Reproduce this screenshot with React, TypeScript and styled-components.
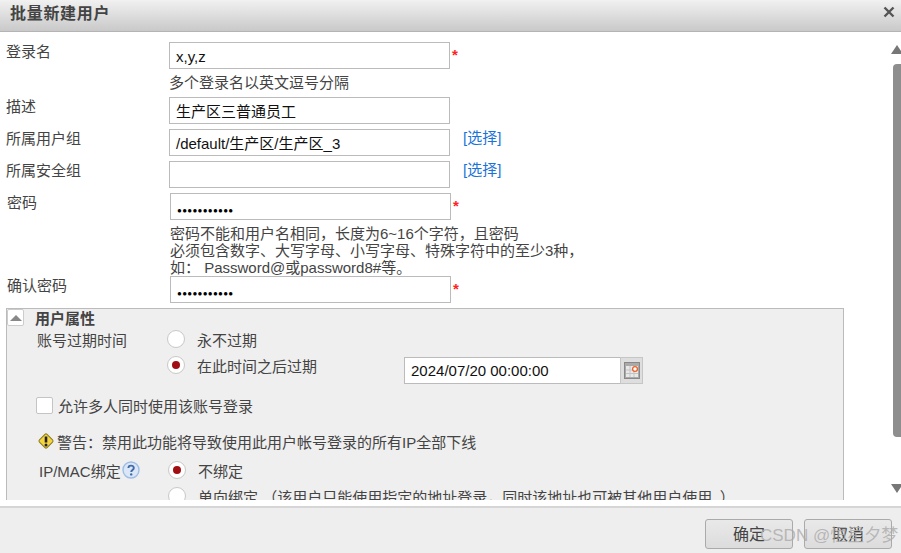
import React, { FC } from "react";
import styled, { createGlobalStyle } from "styled-components";

const GlobalStyle = createGlobalStyle`
  html, body {
    margin: 0;
    padding: 0;
    background: #fff;
  }
  body {
    font-family: "Liberation Sans", "Noto Sans CJK SC", sans-serif;
    font-size: 15px;
    color: #444;
  }
`;

const Dialog = styled.div`
  width: 901px;
  height: 553px;
  display: flex;
  flex-direction: column;
  overflow: hidden;
  position: relative;
`;

const TitleBar = styled.div`
  height: 32px;
  flex: none;
  box-sizing: border-box;
  display: flex;
  align-items: center;
  justify-content: space-between;
  padding: 0 6px 7px 10px;
  background: linear-gradient(#f1f1f1, #c9c9c9);
  border-bottom: 1px solid #b4b4b4;
`;

const Title = styled.b`
  font-size: 16px;
  color: #444;
  letter-spacing: 0.7px;
`;

const Body = styled.div`
  height: 470px;
  flex: none;
  display: flex;
  overflow: hidden;
`;

const Content = styled.div`
  flex: 1;
  padding: 10px 0 0 6px;
`;

const Row = styled.div<{ $nudge?: number; $gap?: number }>`
  display: flex;
  height: 27px;
  margin-bottom: ${(p) => p.$gap ?? 5}px;
  padding-left: ${(p) => p.$nudge ?? 0}px;
`;

const Label = styled.div`
  width: 163px;
  flex: none;
  line-height: 20px;
  color: #444;
`;

const Field = styled.div`
  width: 281px;
  height: 27px;
  flex: none;
  box-sizing: border-box;
  border: 1px solid #bbb;
  background: #fff;
  padding: 1px 6px 0;
  line-height: 26px;
  color: #111;
`;

const Dots = styled.span`
  font-size: 8px;
  letter-spacing: 0.3px;
  color: #000;
`;

const Star = styled.span`
  color: #f22;
  font-weight: bold;
  margin-left: 2px;
  line-height: 26px;
`;

const Pick = styled.a`
  margin-left: 13px;
  line-height: 18px;
  color: #1a73d9;
`;

const Hint = styled.div<{ $left: number; $top?: number; $bottom?: number }>`
  margin: ${(p) => p.$top ?? 0}px 0 ${(p) => p.$bottom ?? 0}px ${(p) => p.$left}px;
  line-height: 17px;
  color: #444;
`;

const Panel = styled.div`
  width: 838px;
  height: 192px;
  box-sizing: border-box;
  margin-top: 5px;
  overflow: hidden;
  background: #efefef;
  border: 1px solid #bbb;
  border-bottom: none;
`;

const PanelHead = styled.div`
  height: 17px;
  display: flex;
  align-items: center;
  gap: 11px;
`;

const Toggle = styled.div`
  width: 17px;
  height: 17px;
  flex: none;
  box-sizing: border-box;
  display: flex;
  align-items: center;
  justify-content: center;
  background: #fff;
  border: 1px solid #ccc;
  border-radius: 2px;
`;

const Arrow = styled.div`
  width: 0;
  height: 0;
  border-left: 6px solid transparent;
  border-right: 6px solid transparent;
  border-bottom: 6px solid #888;
`;

const PanelTitle = styled.b`
  font-size: 15px;
  color: #444;
`;

const OptionRow = styled.div<{ $indent: number; $height: number; $top?: number }>`
  display: flex;
  align-items: center;
  height: ${(p) => p.$height}px;
  margin-top: ${(p) => p.$top ?? 0}px;
  padding-left: ${(p) => p.$indent}px;
  color: #444;
  white-space: nowrap;
`;

const OptionLabel = styled.div<{ $width: number }>`
  width: ${(p) => p.$width}px;
  flex: none;
  display: flex;
  align-items: center;
  gap: 1px;
`;

const Radio = styled.span<{ $on?: boolean }>`
  width: 18px;
  height: 18px;
  flex: none;
  box-sizing: border-box;
  margin-right: 12px;
  display: flex;
  align-items: center;
  justify-content: center;
  border-radius: 50%;
  background: #fff;
  border: 1px solid #c8c8c8;
  &::after {
    content: "";
    width: 8px;
    height: 8px;
    border-radius: 50%;
    background: ${(p) => (p.$on ? "#a00d12" : "transparent")};
  }
`;

const DateGroup = styled.div`
  display: flex;
  align-items: flex-start;
  height: 27px;
  margin: 10px 0 0 87px;
`;

const DateField = styled.div`
  width: 216px;
  height: 27px;
  box-sizing: border-box;
  background: #fff;
  border: 1px solid #bbb;
  border-right: none;
  padding-left: 6px;
  line-height: 26px;
  color: #111;
`;

const CalendarBtn = styled.div`
  width: 23px;
  height: 27px;
  box-sizing: border-box;
  display: flex;
  align-items: center;
  justify-content: center;
  background: #dedede;
  border: 1px solid #c6c6c6;
`;

const CheckBox = styled.span`
  width: 17px;
  height: 17px;
  flex: none;
  box-sizing: border-box;
  margin-right: 5px;
  background: #fff;
  border: 1px solid #c4c4c4;
  border-radius: 2px;
`;

const WarnSvg = styled.svg`
  flex: none;
  margin-right: 2px;
`;

const Scrollbar = styled.div`
  width: 8px;
  flex: none;
  display: flex;
  flex-direction: column;
  align-items: center;
  padding: 13px 0 9px;
`;

const ScrollArrow = styled.div<{ $down?: boolean }>`
  width: 0;
  height: 0;
  flex: none;
  border-left: 6px solid transparent;
  border-right: 6px solid transparent;
  ${(p) => (p.$down ? "border-top: 9px solid #777;" : "border-bottom: 9px solid #777;")}
`;

const ScrollThumb = styled.div`
  width: 8px;
  height: 373px;
  flex: none;
  margin: 10px 0 auto;
  background: #8e8e8e;
  border-radius: 4px 0 0 4px;
`;

const Footer = styled.div`
  flex: 1;
  margin-top: 4px;
  display: flex;
  justify-content: flex-end;
  gap: 11px;
  padding: 11px 9px 0 0;
  background: #eeeeee;
  border-top: 2px solid #d6d6d6;
`;

const Button = styled.div`
  width: 88px;
  height: 30px;
  box-sizing: border-box;
  text-align: center;
  line-height: 29px;
  font-size: 16px;
  color: #444;
  background: linear-gradient(#e9e9e9, #dcdcdc);
  border: 1px solid #aaa;
  border-radius: 3px;
`;

const Watermark = styled.div`
  position: absolute;
  left: 760px;
  top: 527px;
  font-size: 17px;
  line-height: 18px;
  color: rgba(170, 170, 170, 0.8);
  white-space: nowrap;
`;

const CloseIcon: FC = () => (
  <svg width="12" height="12" viewBox="0 0 12 12">
    <path d="M1.5 1.5l9 9M10.5 1.5l-9 9" stroke="#555" strokeWidth="2.4" />
  </svg>
);

const CalendarIcon: FC = () => (
  <svg width="16" height="17" viewBox="0 0 16 17">
    <rect x="0.5" y="0.5" width="15" height="16" fill="#aaa" stroke="#888" />
    <rect x="2" y="4" width="12" height="11" fill="#e8e8e8" />
    <path d="M2 8h12M2 11.5h12M6 4v11M10 4v11" stroke="#c4c4c4" />
    <circle cx="11" cy="7" r="2.4" fill="#fff" stroke="#e8622a" strokeWidth="1.3" />
  </svg>
);

const WarnIcon: FC = () => (
  <WarnSvg width="18" height="18" viewBox="0 0 18 18">
    <rect x="3.6" y="3.6" width="10.8" height="10.8" rx="1.5" transform="rotate(45 9 9)" fill="#f4d53f" stroke="#8d7a1e" />
    <path d="M9 4.5v6" stroke="#222" strokeWidth="2.6" />
    <circle cx="9" cy="13" r="1.5" fill="#222" />
  </WarnSvg>
);

const HelpIcon: FC = () => (
  <svg width="18" height="18" viewBox="0 0 18 18">
    <circle cx="9" cy="9" r="8" fill="#dbe7f6" stroke="#9dbde6" strokeWidth="1.4" />
    <path d="M6.4 7c0-3.2 5.4-3.2 5.4 0 0 2-2.6 2-2.6 4" fill="none" stroke="#3f6aa6" strokeWidth="1.9" />
    <circle cx="9.2" cy="13.4" r="1.2" fill="#3f6aa6" />
  </svg>
);

const App: FC = () => {
  return (
    <Dialog>
      <GlobalStyle />
      <TitleBar>
        <Title>批量新建用户</Title>
        <CloseIcon />
      </TitleBar>
      <Body>
        <Content>
          <Row $gap={2}>
            <Label>登录名</Label>
            <Field>x,y,z</Field>
            <Star>*</Star>
          </Row>
          <Hint $left={163} $top={5} $bottom={6}>多个登录名以英文逗号分隔</Hint>
          <Row>
            <Label>描述</Label>
            <Field>生产区三普通员工</Field>
          </Row>
          <Row>
            <Label>所属用户组</Label>
            <Field>/default/生产区/生产区_3</Field>
            <Pick>[选择]</Pick>
          </Row>
          <Row>
            <Label>所属安全组</Label>
            <Field />
            <Pick>[选择]</Pick>
          </Row>
          <Row $nudge={1}>
            <Label>密码</Label>
            <Field><Dots>●●●●●●●●●●●</Dots></Field>
            <Star>*</Star>
          </Row>
          <Hint $left={164}>密码不能和用户名相同，长度为6~16个字符，且密码</Hint>
          <Hint $left={164}>必须包含数字、大写字母、小写字母、特殊字符中的至少3种，</Hint>
          <Hint $left={164}>如： Password@或password8#等。</Hint>
          <Row $nudge={1} $gap={0}>
            <Label>确认密码</Label>
            <Field><Dots>●●●●●●●●●●●</Dots></Field>
            <Star>*</Star>
          </Row>
          <Panel>
            <PanelHead>
              <Toggle><Arrow /></Toggle>
              <PanelTitle>用户属性</PanelTitle>
            </PanelHead>
            <OptionRow $indent={30} $height={26}>
              <OptionLabel $width={130}>账号过期时间</OptionLabel>
              <Radio />
              永不过期
            </OptionRow>
            <OptionRow $indent={160} $height={26}>
              <Radio $on />
              在此时间之后过期
              <DateGroup>
                <DateField>2024/07/20 00:00:00</DateField>
                <CalendarBtn><CalendarIcon /></CalendarBtn>
              </DateGroup>
            </OptionRow>
            <OptionRow $indent={29} $height={20} $top={17}>
              <CheckBox />
              允许多人同时使用该账号登录
            </OptionRow>
            <OptionRow $indent={30} $height={20} $top={16}>
              <WarnIcon />
              警告：禁用此功能将导致使用此用户帐号登录的所有IP全部下线
            </OptionRow>
            <OptionRow $indent={32} $height={26} $top={6}>
              <OptionLabel $width={129}>IP/MAC绑定<HelpIcon /></OptionLabel>
              <Radio $on />
              不绑定
            </OptionRow>
            <OptionRow $indent={161} $height={26}>
              <Radio />
              单向绑定 （该用户只能使用指定的地址登录，同时该地址也可被其他用户使用。）
            </OptionRow>
          </Panel>
        </Content>
        <Scrollbar>
          <ScrollArrow />
          <ScrollThumb />
          <ScrollArrow $down />
        </Scrollbar>
      </Body>
      <Footer>
        <Button>确定</Button>
        <Button>取消</Button>
      </Footer>
      <Watermark>CSDN @恒星夕梦</Watermark>
    </Dialog>
  );
};

export default App;
